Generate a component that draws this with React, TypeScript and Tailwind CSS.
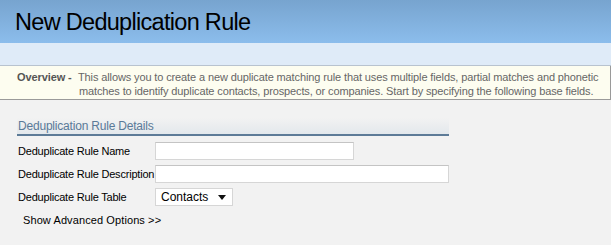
import React from "react";

export default function App() {
  return (
    <div className="w-[611px] h-[245px] bg-[#f2f2f2] overflow-hidden font-['Liberation_Sans',sans-serif]">
      <div className="h-[43px] bg-gradient-to-b from-[#77a4cf] to-[#8cbdec] pl-[15px] pt-[10px]">
        <h1 className="text-[23.5px] leading-[24px] text-black tracking-[-0.7px]">New Deduplication Rule</h1>
      </div>
      <div className="h-[23px] bg-[#dfebf8] border-b border-[#b8c3cf]" />
      <div className="h-[34px] bg-[#fdfdf0] border-b border-r border-[#9a9a9a] flex pt-[4px] text-[11px] leading-[14px]">
        <div className="w-[78px] pl-[17px] text-[#555] shrink-0 whitespace-nowrap font-bold tracking-[-0.1px]">Overview -</div>
        <div className="text-[#666] whitespace-nowrap tracking-[-0.12px]">
          This allows you to create a new duplicate matching rule that uses multiple fields, partial matches and phonetic
          <br />
          <span className="pl-[1px]">matches to identify duplicate contacts, prospects, or companies. Start by specifying the following base fields.</span>
        </div>
      </div>
      <div className="pl-[17px] pt-[18px]">
        <div className="w-[432px] h-[18px] border-b-2 border-[#5d7b97] bg-gradient-to-b from-[#f2f2f2] to-[#e3e8ec] text-[#5a7a98] text-[12px] leading-[17px] pl-[1px] tracking-[-0.2px]">
          Deduplication Rule Details
        </div>
        <div className="mt-[6px] flex flex-col gap-[5px] text-[11px] text-black">
          <div className="flex items-center h-[18px]">
            <div className="w-[138px] pl-[1px] whitespace-nowrap tracking-[-0.2px]">Deduplicate Rule Name</div>
            <div className="w-[199px] h-[18px] bg-white border border-[#d6d6d6] border-t-[#c4c4c4]" />
          </div>
          <div className="flex items-center h-[18px]">
            <div className="w-[138px] pl-[1px] whitespace-nowrap tracking-[-0.2px]">Deduplicate Rule Description</div>
            <div className="w-[294px] h-[18px] bg-white border border-[#d6d6d6] border-t-[#c4c4c4]" />
          </div>
          <div className="flex items-center h-[18px]">
            <div className="w-[138px] pl-[1px] whitespace-nowrap tracking-[-0.2px]">Deduplicate Rule Table</div>
            <div className="w-[78px] h-[18px] bg-white border border-[#d6d6d6] flex items-center justify-between pl-[5px] pr-[6px] text-[12px]">
              <span>Contacts</span>
              <svg width="8" height="5" viewBox="0 0 8 5"><polygon points="0,0 8,0 4,5" fill="#111" /></svg>
            </div>
          </div>
          <div className="pl-[6px] text-[11px] mt-[1px] whitespace-nowrap tracking-[0.1px]">Show Advanced Options &gt;&gt;</div>
        </div>
      </div>
    </div>
  );
}
